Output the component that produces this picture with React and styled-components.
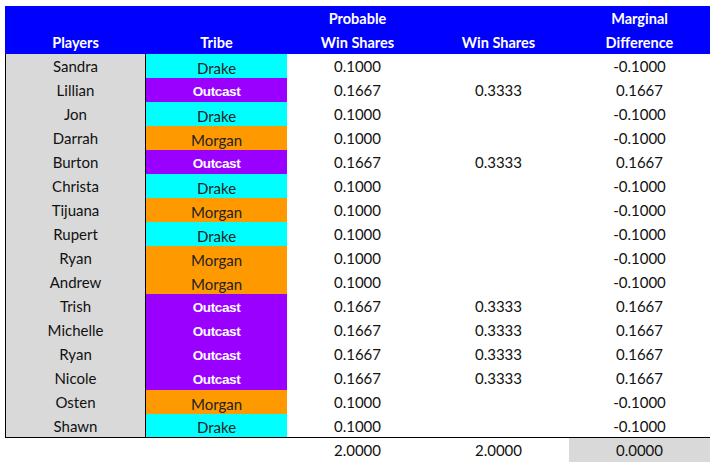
import React from "react";
import styled, { createGlobalStyle } from "styled-components";

const GlobalStyle = createGlobalStyle`
  body {
    margin: 0;
    padding: 6px 0 0 5px;
    background: #fff;
    font-family: Lato, "Open Sans", sans-serif;
  }
`;

const Sheet = styled.div`
  display: grid;
  grid-template-columns: repeat(5, 141px);
  width: 705px;
`;

const HeadCell = styled.div`
  height: 48px;
  background: #0000ff;
  color: #fff;
  font-weight: 700;
  font-size: 14.5px;
  display: flex;
  flex-direction: column;
  align-items: center;
  line-height: 24px;
  padding-top: 1px;
  box-sizing: border-box;
  overflow: hidden;
`;

const Cell = styled.div`
  height: 24px;
  display: flex;
  align-items: center;
  justify-content: center;
  font-size: 15px;
  color: #111;
  box-sizing: border-box;
  border-bottom: ${(p) => (p.$last ? "1px solid #000" : "none")};
`;

const PlayerCell = styled(Cell)`
  background: #d9d9d9;
  border-left: 1px solid #000;
  border-right: 1px solid #000;
`;

const tribeColors = {
  Drake: { bg: "#00ffff", fg: "#222" },
  Outcast: { bg: "#9900ff", fg: "#fff" },
  Morgan: { bg: "#ff9900", fg: "#222" },
};

const TribeCell = styled(Cell)`
  background: ${(p) => tribeColors[p.$tribe].bg};
  color: ${(p) => tribeColors[p.$tribe].fg};
  padding-top: 3px;
  font-family: ${(p) =>
    p.$tribe === "Outcast" ? `"Liberation Sans", Arial, sans-serif` : `Lato, sans-serif`};
  font-size: ${(p) => (p.$tribe === "Outcast" ? "13.5px" : "15px")};
  font-weight: ${(p) => (p.$tribe === "Outcast" ? 700 : 400)};
  letter-spacing: ${(p) => (p.$tribe === "Outcast" ? "-0.4px" : "0")};
`;

const TotalCell = styled(Cell)`
  background: ${(p) => (p.$shade ? "#d9d9d9" : "transparent")};
`;

const headers = [
  ["", "Players"],
  ["", "Tribe"],
  ["Probable", "Win Shares"],
  ["", "Win Shares"],
  ["Marginal", "Difference"],
];

const rows = [
  ["Sandra", "Drake", "0.1000", "", "-0.1000"],
  ["Lillian", "Outcast", "0.1667", "0.3333", "0.1667"],
  ["Jon", "Drake", "0.1000", "", "-0.1000"],
  ["Darrah", "Morgan", "0.1000", "", "-0.1000"],
  ["Burton", "Outcast", "0.1667", "0.3333", "0.1667"],
  ["Christa", "Drake", "0.1000", "", "-0.1000"],
  ["Tijuana", "Morgan", "0.1000", "", "-0.1000"],
  ["Rupert", "Drake", "0.1000", "", "-0.1000"],
  ["Ryan", "Morgan", "0.1000", "", "-0.1000"],
  ["Andrew", "Morgan", "0.1000", "", "-0.1000"],
  ["Trish", "Outcast", "0.1667", "0.3333", "0.1667"],
  ["Michelle", "Outcast", "0.1667", "0.3333", "0.1667"],
  ["Ryan", "Outcast", "0.1667", "0.3333", "0.1667"],
  ["Nicole", "Outcast", "0.1667", "0.3333", "0.1667"],
  ["Osten", "Morgan", "0.1000", "", "-0.1000"],
  ["Shawn", "Drake", "0.1000", "", "-0.1000"],
];

export default function App() {
  return (
    <>
      <GlobalStyle />
      <Sheet>
        {headers.map(([top, bottom], i) => (
          <HeadCell key={i}>
            <span>{top || "\u00a0"}</span>
            <span>{bottom}</span>
          </HeadCell>
        ))}

        {rows.map((r, i) => {
          const last = i === rows.length - 1;
          return (
            <React.Fragment key={i}>
              <PlayerCell $last={last}>{r[0]}</PlayerCell>
              <TribeCell $tribe={r[1]} $last={last}>
                {r[1]}
              </TribeCell>
              <Cell $last={last}>{r[2]}</Cell>
              <Cell $last={last}>{r[3]}</Cell>
              <Cell $last={last}>{r[4]}</Cell>
            </React.Fragment>
          );
        })}

        <TotalCell />
        <TotalCell />
        <TotalCell>2.0000</TotalCell>
        <TotalCell>2.0000</TotalCell>
        <TotalCell $shade>0.0000</TotalCell>
      </Sheet>
    </>
  );
}
